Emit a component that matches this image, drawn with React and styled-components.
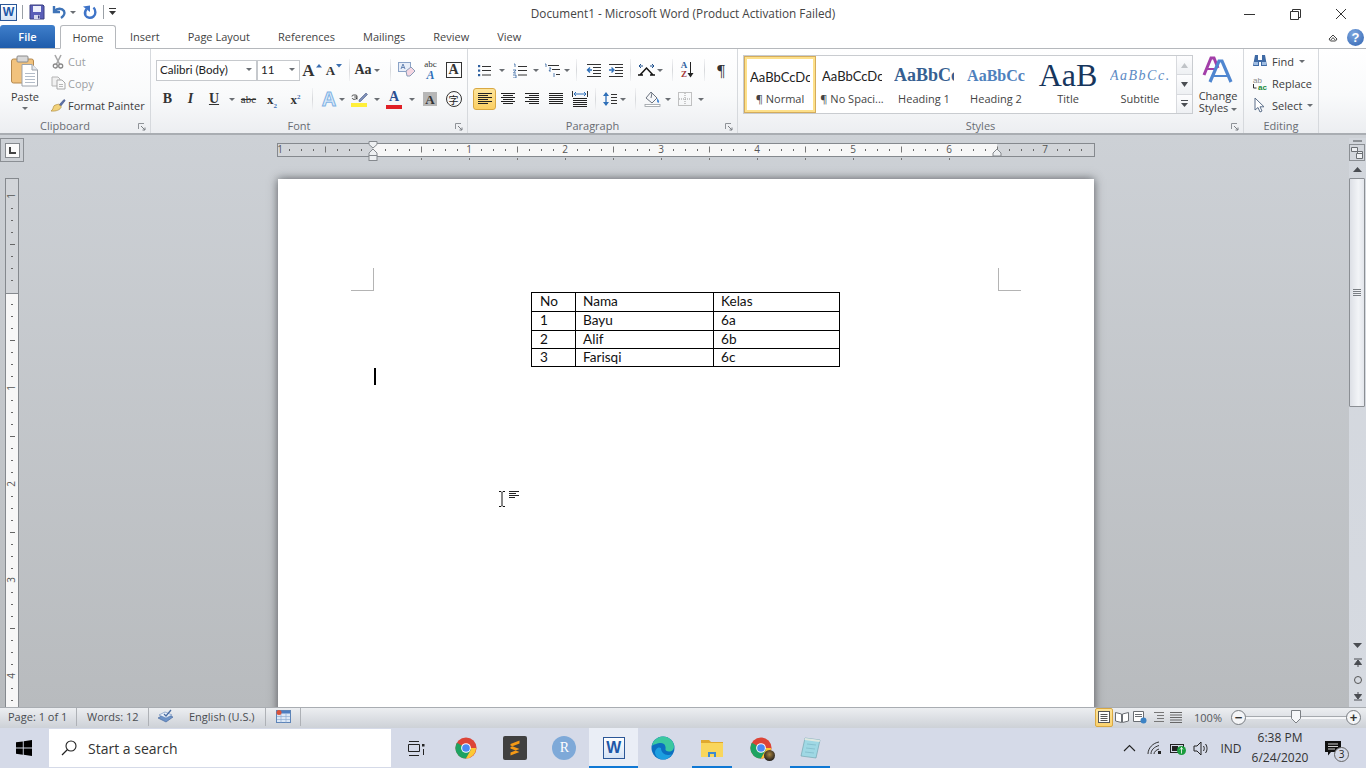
import React from 'react'
import styled, { createGlobalStyle } from 'styled-components'

const uiFont = '"Open Sans", "Noto Sans", "Liberation Sans", sans-serif'

const Global = createGlobalStyle`
  html, body { margin:0; padding:0; background:#fff; }
  body { font-family:${uiFont}; font-size:11px; color:#3c3c3c; overflow:hidden; }
  svg { display:block; flex:none; }
`
const Screen = styled.div`
  width:1366px;
  height:768px;
  display:flex;
  flex-direction:column;
  overflow:hidden;
`

/* title bar */
const TitleBar = styled.div`
  height:25px;
  flex:none;
  display:grid;
  grid-template-columns:1fr auto 1fr;
  background:#fff;
`
const Qat = styled.div`
  display:flex;
  align-items:center;
  height:24px;
`
const WordBadge = styled.span`
  width:${p => p.$size}px;
  height:${p => p.$size}px;
  box-sizing:border-box;
  display:inline-flex;
  align-items:center;
  justify-content:center;
  border:1px solid #2b5797;
  background:linear-gradient(#ffffff,#d5e3f5);
  color:#1e58a8;
  font:bold ${p => p.$size * 0.72}px "Liberation Sans", sans-serif;
`
const QatSep = styled.span`
  width:1px;
  height:14px;
  background:#9aa0a6;
  margin:0 ${p => p.$gap || 7}px;
`
const QatItem = styled.span`
  display:flex;
  align-items:center;
  margin-left:${p => p.$ml || 0}px;
`
const WindowTitle = styled.div`
  font-size:11.75px;
  line-height:26px;
  color:#444;
  white-space:nowrap;
`
const WindowControls = styled.div`
  display:flex;
  justify-content:flex-end;
  padding-right:2px;
`
const WinBtn = styled.span`
  width:46px;
  height:28px;
  display:flex;
  align-items:center;
  justify-content:center;
`

/* tabs */
const TabRow = styled.div`
  height:24px;
  flex:none;
  display:flex;
  align-items:flex-end;
  background:#fff;
  border-bottom:1px solid #b5b8bc;
  box-sizing:border-box;
`
const FileTab = styled.div`
  width:55px;
  height:23px;
  margin-right:5px;
  border-radius:3px 3px 0 0;
  background:linear-gradient(#3f7fcb,#1f5cab);
  color:#fff;
  text-align:center;
  line-height:23px;
  font-weight:600;
`
const Tab = styled.div`
  height:23px;
  padding:0 14px;
  line-height:24px;
  color:#444;
  box-sizing:border-box;
  ${p => p.$active && `
    width:56px;
    padding:0;
    text-align:center;
    background:#fff;
    border:1px solid #b5b8bc;
    border-bottom:1px solid #fff;
    border-radius:3px 3px 0 0;
    height:24px;
    margin-bottom:-1px;
    line-height:23px;
  `}
`
const TabRight = styled.div`
  margin-left:auto;
  display:flex;
  align-items:center;
  gap:9px;
  padding:0 2px 2px 0;
`
const HelpDot = styled.span`
  width:17px;
  height:17px;
  border-radius:50%;
  background:radial-gradient(circle at 40% 30%,#7fa8e0,#2f62b0);
  color:#fff;
  text-align:center;
  font:bold 13px/17px "Liberation Sans", sans-serif;
`

/* ribbon */
const Ribbon = styled.div`
  height:86px;
  flex:none;
  display:flex;
  box-sizing:border-box;
  background:linear-gradient(#ffffff 0%,#f9fafb 55%,#eceef1 100%);
  border-bottom:2px solid #a9adb2;
`
const Group = styled.div`
  width:${p => p.$w}px;
  box-sizing:border-box;
  flex:none;
  display:flex;
  flex-direction:column;
  position:relative;
  border-right:1px solid #d6d9dd;
`
const GroupBody = styled.div`
  height:68px;
  box-sizing:border-box;
  padding:${p => p.$pad || '0'};
  display:flex;
  flex-direction:${p => p.$col ? 'column' : 'row'};
  gap:${p => p.$gap || 0}px;
`
const GroupLabel = styled.div`
  height:16px;
  line-height:17px;
  text-align:center;
  padding-right:${p => p.$plain ? 0 : 20}px;
  color:#686c72;
`
const Launcher = styled.span`
  position:absolute;
  right:4px;
  bottom:2px;
`
const ToolRow = styled.div`
  display:flex;
  align-items:center;
  height:22px;
`
const Tool = styled.span`
  width:${p => p.$w || 23}px;
  height:22px;
  flex:none;
  display:inline-flex;
  align-items:center;
  justify-content:center;
  box-sizing:border-box;
  color:#2e2e2e;
  ${p => p.$active && `
    background:linear-gradient(#fde49a,#fbcf63);
    border:1px solid #d9a843;
    border-radius:3px;
  `}
`
const Caret = styled.span`
  width:0;
  height:0;
  flex:none;
  margin-left:${p => p.$ml || 0}px;
  border-left:3px solid transparent;
  border-right:3px solid transparent;
  border-top:3px solid #6a6e73;
`
const Divider = styled.span`
  width:1px;
  height:22px;
  flex:none;
  background:linear-gradient(#f2f3f5,#d6d8db,#f2f3f5);
  margin-left:${p => p.$ml || 0}px;
  margin-right:${p => p.$mr || 0}px;
`
const SerifGlyph = styled.span`
  font-family:"Liberation Serif", serif;
  font-weight:${p => p.$weight || 700};
  font-style:${p => p.$italic ? 'italic' : 'normal'};
  font-size:${p => p.$size || 13}px;
  color:${p => p.$color || '#333'};
  text-decoration:${p => p.$deco || 'none'};
  line-height:1;
`
const EffectGlyph = styled.span`
  font:bold 20px/1 "Liberation Sans", sans-serif;
  color:#dcebfa;
  -webkit-text-stroke:1px #7fb2e4;
`
const GlyphStack = styled.span`
  display:inline-flex;
  flex-direction:column;
  align-items:center;
  line-height:1;
`
const ColorBar = styled.span`
  width:${p => p.$w || 16}px;
  height:4px;
  margin-top:1px;
  background:${p => p.$color};
`
const BoxedGlyph = styled.span`
  width:${p => p.$size || 14}px;
  height:${p => p.$size || 14}px;
  box-sizing:border-box;
  display:inline-flex;
  align-items:center;
  justify-content:center;
  border:1px solid ${p => p.$border || 'transparent'};
  background:${p => p.$bg || 'transparent'};
`
const EnclosedGlyph = styled.span`
  width:16px;
  height:16px;
  box-sizing:border-box;
  display:inline-flex;
  align-items:center;
  justify-content:center;
  border:1px solid #333;
  border-radius:50%;
  font:10px "Noto Sans CJK JP", sans-serif;
  color:#222;
`
const SmallSub = styled.sub`
  font-size:7px;
  color:#3b6fb4;
  line-height:0;
`
const SmallSup = styled.sup`
  font-size:7px;
  color:#3b6fb4;
  line-height:0;
`
const RaisedArrow = styled.span`
  align-self:flex-start;
  margin-top:5px;
  margin-left:1px;
`
const Combo = styled.div`
  width:${p => p.$w}px;
  height:21px;
  box-sizing:border-box;
  flex:none;
  display:flex;
  align-items:center;
  justify-content:space-between;
  padding:0 4px 1px 3px;
  border:1px solid #c6c9cd;
  margin-right:${p => p.$mr || 0}px;
  background:#fff;
  font-family:Lato, "Open Sans", sans-serif;
  font-size:11.6px;
  color:#222;
`

/* clipboard and editing */
const PasteBtn = styled.div`
  width:50px;
  flex:none;
  display:flex;
  flex-direction:column;
  align-items:center;
  padding-top:5px;
  color:#3c3c3c;
`
const PasteLabel = styled.div`
  margin-top:3px;
  margin-bottom:3px;
  line-height:14px;
`
const SmallCol = styled.div`
  display:flex;
  flex-direction:column;
`
const SmallRow = styled.div`
  height:22px;
  display:flex;
  align-items:center;
  gap:${p => p.$gap || 4}px;
  color:${p => p.$muted ? '#9c9fa3' : '#3c3c3c'};
  white-space:nowrap;
`
const IconSlot = styled.span`
  width:16px;
  display:flex;
  justify-content:center;
`

/* styles gallery */
const Gallery = styled.div`
  display:flex;
  height:59px;
  box-sizing:border-box;
  background:#fff;
  border:1px solid #c9ccd0;
`
const StyleCard = styled.div`
  width:72px;
  height:57px;
  box-sizing:border-box;
  flex:none;
  display:flex;
  flex-direction:column;
  align-items:center;
  ${p => p.$active && `
    border:3px solid #fde08a;
    outline:1px solid #d4ac5c;
    outline-offset:-1px;
  `}
`
const StylePreview = styled.div`
  width:60px;
  height:${p => p.$active ? 33 : 36}px;
  box-sizing:border-box;
  padding-top:${p => p.$active ? 2 : 3}px;
  overflow:hidden;
  display:flex;
  align-items:center;
  justify-content:${p => p.$center ? 'center' : 'flex-start'};
  white-space:nowrap;
  font-family:${p => p.$serif ? '"Liberation Serif", serif' : 'Lato, "Open Sans", sans-serif'};
  font-size:${p => p.$size}px;
  font-weight:${p => p.$bold ? 700 : 400};
  font-style:${p => p.$italic ? 'italic' : 'normal'};
  letter-spacing:${p => p.$track || 0}px;
  color:${p => p.$color || '#222'};
`
const StyleName = styled.div`
  line-height:14px;
  white-space:nowrap;
  color:#444;
`
const GalleryScroll = styled.div`
  width:15px;
  flex:none;
  display:flex;
  flex-direction:column;
  border-left:1px solid #d8dade;
`
const ScrollCell = styled.span`
  flex:1;
  display:flex;
  align-items:center;
  justify-content:center;
  background:linear-gradient(#fdfdfe,#eef0f3);
  border-bottom:1px solid #d8dade;
  &:last-child { border-bottom:none; }
`
const BigBtn = styled.div`
  width:48px;
  margin-left:1px;
  flex:none;
  display:flex;
  flex-direction:column;
  align-items:center;
  color:#3c3c3c;
`
const BigBtnLabel = styled.div`
  width:44px;
  margin-top:7px;
  text-align:center;
  line-height:12px;
`
const InlineCaret = styled(Caret)`
  display:inline-block;
  margin-left:3px;
  vertical-align:middle;
`

/* document area */
const Workspace = styled.div`
  flex:1;
  min-height:0;
  display:flex;
  background:linear-gradient(#cdd1d6,#b8bbbe);
`
const LeftGutter = styled.div`
  width:24px;
  flex:none;
  padding-top:3px;
  box-sizing:border-box;
  overflow:hidden;
`
const TabSelector = styled.div`
  width:24px;
  height:24px;
  box-sizing:border-box;
  border:1px solid #8b8f94;
  display:flex;
  align-items:center;
  justify-content:center;
`
const TabStopBox = styled.span`
  width:15px;
  height:15px;
  box-sizing:border-box;
  background:#fbfbfb;
  border:1px solid #85898e;
  display:flex;
  align-items:center;
  justify-content:center;
`
const VRulerWrap = styled.div`
  margin:16px 0 0 5px;
`
const DocArea = styled.div`
  flex:1;
  min-width:0;
  display:flex;
  flex-direction:column;
  align-items:center;
  padding:5px 1px 0 0;
  overflow:hidden;
`
const RulerWrap = styled.div`
  flex:none;
  margin-bottom:17px;
`
const Page = styled.div`
  position:relative;
  flex:none;
  width:816px;
  height:1056px;
  box-sizing:border-box;
  padding:113px 0 0 96px;
  background:#fff;
  box-shadow:0 0 9px rgba(50,52,56,.75);
`
const Corner = styled.span`
  position:absolute;
  top:89px;
  ${p => p.$right ? 'left:720px;' : 'left:73px;'}
  width:23px;
  height:23px;
  box-sizing:border-box;
  border-bottom:1px solid #b4b4b4;
  ${p => p.$right ? 'border-left:1px solid #b4b4b4;' : 'border-right:1px solid #b4b4b4;'}
`
const DocTable = styled.table`
  margin-left:157px;
  width:308px;
  border-collapse:collapse;
  table-layout:fixed;
  font-family:Lato, "Open Sans", sans-serif;
  font-size:13.6px;
  color:#111;
`
const Td = styled.td`
  border:1px solid #000;
  padding:0 0 0 ${p => p.$pl || 7}px;
  height:${p => p.$h}px;
  line-height:1;
  box-sizing:border-box;
`
const TextCaret = styled.div`
  width:2px;
  height:17px;
  margin-top:1px;
  background:#000;
`
const MouseCursor = styled.span`
  position:absolute;
  left:220px;
  top:312px;
  display:flex;
  align-items:flex-start;
  gap:3px;
`

/* scrollbar */
const ScrollBar = styled.div`
  width:17px;
  flex:none;
  margin-top:3px;
  padding-bottom:2px;
  box-sizing:border-box;
  display:flex;
  flex-direction:column;
  background:linear-gradient(#d2d6dc,#d6dae1);
`
const SplitHandle = styled.span`
  height:6px;
  flex:none;
  display:flex;
  justify-content:center;
  align-items:center;
  &::after { content:""; width:9px; height:2px; background:#8d9196; }
`
const RulerToggle = styled.span`
  height:17px;
  width:16px;
  flex:none;
  box-sizing:border-box;
  border:1px solid #8b8f94;
  display:flex;
  align-items:center;
  justify-content:center;
`
const ScrollBtn = styled.span`
  height:17px;
  flex:none;
  display:flex;
  align-items:center;
  justify-content:center;
`
const Thumb = styled.span`
  height:229px;
  width:16px;
  flex:none;
  box-sizing:border-box;
  border:1px solid #8b8f94;
  border-radius:1px;
  background:linear-gradient(90deg,#dde0e6,#f2f4f7 60%,#e3e6ec);
  display:flex;
  align-items:center;
  justify-content:center;
`
const ScrollSpacer = styled.span`
  flex:1;
`

/* status bar */
const StatusBar = styled.div`
  height:21px;
  flex:none;
  display:flex;
  align-items:center;
  box-sizing:border-box;
  padding-bottom:2px;
  border-top:1px solid #a9adb2;
  background:linear-gradient(#eceef1,#cdd1d7);
  color:#4a4d52;
`
const StatusItem = styled.div`
  width:${p => p.$w}px;
  height:18px;
  box-sizing:border-box;
  flex:none;
  display:flex;
  align-items:center;
  justify-content:${p => p.$center ? 'center' : 'flex-start'};
  padding-left:${p => p.$pl || 0}px;
  padding-bottom:1px;
  gap:${p => p.$gap || 0}px;
  border-right:1px solid #aeb1b6;
  white-space:nowrap;
`
const StatusRight = styled.div`
  margin-left:auto;
  display:flex;
  align-items:center;
  padding-right:5px;
`
const ViewBtn = styled.span`
  width:18px;
  height:19px;
  box-sizing:border-box;
  display:flex;
  align-items:center;
  justify-content:center;
  ${p => p.$active && `
    background:linear-gradient(#fde49a,#fbd26e);
    border:1px solid #d9a843;
    border-radius:2px;
  `}
`
const ZoomLabel = styled.span`
  width:46px;
  text-align:center;
  color:#55585c;
`
const ZoomRound = styled.span`
  width:15px;
  height:15px;
  box-sizing:border-box;
  border:1px solid #777b80;
  border-radius:50%;
  background:#f4f5f7;
  color:#333;
  font:bold 13px/1 "Liberation Sans", sans-serif;
  display:flex;
  align-items:center;
  justify-content:center;
`
const ZoomTrack = styled.span`
  position:relative;
  width:100px;
  height:14px;
  display:flex;
  align-items:center;
  &::before { content:""; flex:1; height:2px; background:#f5f6f8; border-top:1px solid #a5a9ae; }
`
const ZoomThumb = styled.span`
  position:absolute;
  left:45px;
  top:0;
`

/* taskbar */
const Taskbar = styled.div`
  height:40px;
  flex:none;
  display:flex;
  align-items:stretch;
  background:#d5dae8;
  color:#222;
`
const StartBtn = styled.div`
  width:48px;
  flex:none;
  display:flex;
  align-items:center;
  justify-content:center;
`
const SearchBox = styled.div`
  width:342px;
  margin:1px;
  flex:none;
  display:flex;
  align-items:center;
  gap:11px;
  padding-left:12px;
  box-sizing:border-box;
  background:#fff;
  font-size:14px;
  color:#333;
`
const TaskSlot = styled.div`
  position:relative;
  width:49.25px;
  flex:none;
  display:flex;
  align-items:center;
  justify-content:center;
  background:${p => p.$active ? '#eaeef6' : 'transparent'};
  ${p => p.$running && `
    &::after {
      content:"";
      position:absolute;
      bottom:0;
      left:${p.$active ? 0 : 4}px;
      right:${p.$active ? 0 : 5}px;
      height:2px;
      background:#0f78d4;
    }
  `}
`
const SlotBadge = styled.span`
  position:relative;
  display:flex;
`
const ProfileDot = styled.span`
  position:absolute;
  right:-3px;
  bottom:-2px;
  width:11px;
  height:11px;
  border-radius:50%;
  background:radial-gradient(circle at 50% 40%,#a8843f,#2c2620 70%);
`
const RoundLetter = styled.span`
  width:24px;
  height:24px;
  border-radius:50%;
  background:#7ea9d8;
  color:#fff;
  text-align:center;
  font:14px/24px "Liberation Serif", serif;
`
const Tray = styled.div`
  margin-left:auto;
  display:flex;
  align-items:center;
  padding-right:12px;
`
const TraySlot = styled.div`
  width:${p => p.$w}px;
  flex:none;
  display:flex;
  align-items:center;
  justify-content:center;
  font-size:12px;
  color:#333;
`
const Clock = styled.div`
  width:64px;
  flex:none;
  text-align:center;
  font-size:12px;
  line-height:20px;
  color:#333;
`
const NotifyCount = styled.span`
  position:absolute;
  right:-8px;
  bottom:-6px;
  width:15px;
  height:15px;
  box-sizing:border-box;
  border:1px solid #666;
  border-radius:50%;
  background:#d5dae8;
  font-size:10px;
  line-height:13px;
  text-align:center;
  color:#222;
`

/* drawings */
const Svg = ({ w = 16, h = 16, children }) => (
  <svg width={w} height={h} viewBox={`0 0 ${w} ${h}`} fill="none">{children}</svg>
)
const Lines = ({ x = 1, rows, w = 13, color = '#333' }) => rows.map((y, i) => (
  <rect key={i} x={Array.isArray(y) ? y[1] : x} y={Array.isArray(y) ? y[0] : y} width={Array.isArray(y) ? y[2] : w} height="1" fill={color} />
))

const SaveIcon = () => (
  <Svg>
    <path d="M1 1h13l1 1v13H1z" fill="#5a5fb8" stroke="#3a3e80" />
    <rect x="4" y="2" width="8" height="6" fill="#eef0fb" />
    <rect x="5" y="11" width="6" height="4" fill="#d6d9ee" />
    <rect x="9" y="11.5" width="1.5" height="3" fill="#3a3e80" />
  </Svg>
)
const UndoIcon = () => (
  <Svg>
    <path d="M3 2v6h6M3.5 7.5C6 4 11 4 13 7c1 2 0 5-3 7" stroke="#3f74b8" strokeWidth="2.4" />
  </Svg>
)
const RedoIcon = () => (
  <Svg>
    <path d="M11.5 3.5C14 6 14 10.5 11.5 12.5 9 14.5 5 14 3.5 11.5 2.5 9.5 3 7 4.5 5" stroke="#3f74c8" strokeWidth="2.4" />
    <path d="M1 2.5L8 1.5V8z" fill="#3f74c8" />
  </Svg>
)
const CustomizeIcon = () => (
  <Svg w={7} h={8}>
    <rect x="0" y="0" width="7" height="1" fill="#333" />
    <path d="M0 3h7L3.5 7z" fill="#333" />
  </Svg>
)
const Minimize = () => <Svg w={11} h={11}><rect y="5" width="11" height="1" fill="#333" /></Svg>
const Restore = () => (
  <Svg w={11} h={11}>
    <path d="M.5 2.5h8v8h-8zM2.5 2.5v-2h8v8h-2" stroke="#333" />
  </Svg>
)
const Close = () => <Svg w={12} h={12}><path d="M1 1l10 10M11 1L1 11" stroke="#333" /></Svg>
const RibbonCollapse = () => (
  <Svg w={10} h={9}>
    <path d="M1 6l4-4 4 4-1.5 2h-5zM2.8 7L5 4.6 7.2 7" stroke="#444" />
  </Svg>
)
const LauncherIcon = () => (
  <Svg w={8} h={8}>
    <path d="M.5 6V.5H6" stroke="#8f9398" />
    <path d="M3 3l4 4M7 4.5V7H4.5" stroke="#7a7e83" />
  </Svg>
)
const PasteIcon = () => (
  <Svg w={28} h={32}>
    <rect x=".5" y="4" width="22" height="24" rx="2" fill="#f1c27d" stroke="#b5894e" />
    <rect x="6" y="1" width="11" height="6" rx="1" fill="#d8d8d8" stroke="#8a8a8a" />
    <path d="M11 9.5h10l5.5 5.5v16H11z" fill="#fff" stroke="#9da3ab" />
    <path d="M21 9.5V15h5.5" fill="#e4e8ee" stroke="#9da3ab" />
    <Lines x={14} w={10} rows={[18, 21, 24, 27]} color="#b3bcc8" />
  </Svg>
)
const CutIcon = () => (
  <Svg w={12} h={15}>
    <path d="M3 1l4.5 9M9 1L4.5 10" stroke="#a8a8a8" strokeWidth="1.6" />
    <circle cx="3.3" cy="12" r="2" stroke="#888" strokeWidth="1.3" />
    <circle cx="8.7" cy="12" r="2" stroke="#888" strokeWidth="1.3" />
  </Svg>
)
const CopyIcon = () => (
  <Svg w={15} h={14}>
    <path d="M1 1h6l2 2v7H1z" fill="#f1f1f1" stroke="#b4b4b4" />
    <path d="M6 4h5l3 3v6H6z" fill="#fafafa" stroke="#a8a8a8" />
    <Lines x={8} w={4} rows={[8, 10]} color="#b8b8b8" />
  </Svg>
)
const BrushIcon = () => (
  <Svg w={16} h={14}>
    <path d="M9 7L14 1.5l1.2 1L10.5 8.5z" fill="#5a6fa8" stroke="#3d4d80" strokeWidth=".6" />
    <path d="M8.5 6.2l2.8 2.4C10.5 12 6 13.5 1 13c2-1 2-3.5 3-5.2 1-.9 3-1.2 4.5-1.6z" fill="#f2d27b" stroke="#b08d3a" strokeWidth=".7" />
  </Svg>
)
const GrowArrow = ({ down }) => (
  <Svg w={6} h={4}>
    <path d={down ? 'M0 0h6L3 3.5z' : 'M0 3.5h6L3 0z'} fill="#3c6fb0" />
  </Svg>
)
const ClearFormat = () => (
  <Svg w={18} h={16}>
    <rect x=".5" y=".5" width="12" height="9" fill="#e8eef8" stroke="#8ba3c7" />
    <path d="M8 9l5-4 4 4-5 5h-3z" fill="#f5d7e2" stroke="#8a9cb8" />
    <path d="M3 7l2-5 2 5M3.7 5.5h2.6" stroke="#4a6da3" strokeWidth=".8" />
  </Svg>
)
const HighlightIcon = () => (
  <GlyphStack>
    <Svg w={17} h={11}>
      <path d="M8 9l7-7 1.500 1.500-7 7H8z" fill="#7e8fb8" stroke="#4a5a85" strokeWidth=".6" />
      <path d="M1 5.500C1 4 2 4 4 4s2 .6 2 2v2.500M3.200 6H6M1.200 7.200c.3 1.500 3 1.600 4.800 0" stroke="#222" strokeWidth=".8" />
    </Svg>
    <ColorBar $color="#ffef3a" />
  </GlyphStack>
)
const BulletsIcon = () => (
  <Svg>
    <rect x="1" y="3" width="2.2" height="2.2" fill="#2e5f9e" />
    <rect x="1" y="7.5" width="2.2" height="2.2" fill="#2e5f9e" />
    <rect x="1" y="12" width="2.2" height="2.2" fill="#2e5f9e" />
    <Lines x={5} w={9} rows={[4, 8, 12.5]} />
  </Svg>
)
const NumberingIcon = () => (
  <Svg>
    <path d="M2 2h1v3M1 8h3L1.5 11H4M1 13h3v3H1" stroke="#2e5f9e" strokeWidth=".8" />
    <Lines x={6} w={9} rows={[4, 8, 12.5]} />
  </Svg>
)
const MultilevelIcon = () => (
  <Svg>
    <path d="M1 2h1v3M5 6h2L5 9h2M10 11v4" stroke="#2e5f9e" strokeWidth=".8" />
    <Lines rows={[[3, 4, 11], [7, 8, 8], [12, 12, 4]]} />
  </Svg>
)
const IndentIcon = ({ increase }) => (
  <Svg>
    <Lines rows={[[2, 1, 14], [5, 7, 8], [8, 7, 8], [11, 7, 8], [14, 1, 14]]} />
    <path d={increase ? 'M1 8h4M3.5 5.5L6 8l-2.5 2.5' : 'M6 8H2M4 5.5L1.5 8 4 10.5'} stroke="#2e6fb8" strokeWidth="1.4" />
  </Svg>
)
const TextDirIcon = () => (
  <Svg w={17} h={14}>
    <path d="M2 12L8.5 5 15 12M0 12h5M12 12h5" stroke="#111" strokeWidth="1.5" />
    <path d="M1 3h4M3 1L1 3l2 2M12 3h4M14 1l2 2-2 2" stroke="#1d4f8c" strokeWidth="1" />
  </Svg>
)
const SortArrow = () => (
  <Svg w={7} h={16}>
    <path d="M3.5 0v13" stroke="#222" />
    <path d="M.5 11h6l-3 4.5z" fill="#222" />
  </Svg>
)
const AlignIcon = ({ rows: lineRows }) => (
  <Svg>
    <Lines rows={lineRows} color="#222" />
  </Svg>
)
const alignLeft = [[2, 1, 14], [4, 1, 10], [6, 1, 14], [8, 1, 10], [10, 1, 14], [12, 1, 10]]
const alignCenter = [[2, 1, 14], [4, 3, 10], [6, 1, 14], [8, 3, 10], [10, 1, 14], [12, 3, 10]]
const alignRight = [[2, 1, 14], [4, 5, 10], [6, 1, 14], [8, 5, 10], [10, 1, 14], [12, 5, 10]]
const alignJustify = [[2, 1, 14], [4, 1, 14], [6, 1, 14], [8, 1, 14], [10, 1, 14], [12, 1, 14]]
const DistributedIcon = () => (
  <Svg>
    <path d="M.5 0v6M15.5 0v6" stroke="#333" />
    <path d="M2 3h12M4 1L2 3l2 2M12 1l2 2-2 2" stroke="#2e6fb8" />
    <Lines x={1} w={14} rows={[7, 9, 11, 13, 15]} color="#222" />
  </Svg>
)
const LineSpacingIcon = () => (
  <Svg w={14} h={16}>
    <path d="M3 2v12" stroke="#2e6fb8" strokeWidth="1.3" />
    <path d="M0 5l3-4 3 4zM0 11l3 4 3-4z" fill="#2e6fb8" />
    <Lines x={8} w={6} rows={[3, 6, 9, 12]} />
  </Svg>
)
const BucketIcon = () => (
  <Svg w={17} h={16}>
    <path d="M7 1l6 6-5 5-6-5z" fill="#f6f7f9" stroke="#6c7480" />
    <path d="M8 2L7 7" stroke="#6c7480" />
    <path d="M13 7c1.5 1.5 2.5 3 2 4.5-1 .6-2 0-2-1.500z" fill="#4a8ad4" />
    <rect x="1" y="13.5" width="15" height="2" fill="#fff" stroke="#9a9ea3" strokeWidth=".8" />
  </Svg>
)
const BordersIcon = () => (
  <Svg w={14} h={14}>
    <rect x=".5" y=".5" width="13" height="13" stroke="#888" strokeDasharray="1 1" />
    <path d="M7 1v12M1 7h12" stroke="#999" strokeDasharray="1 1" />
  </Svg>
)
const ChangeStylesIcon = () => (
  <Svg w={32} h={28}>
    <path d="M2 20L9 3h3l4 10" stroke="#a23ea8" strokeWidth="3" />
    <path d="M5 14h8" stroke="#a23ea8" strokeWidth="2" />
    <path d="M8 27L17 6h3l9 21" stroke="#4f86d0" strokeWidth="3.2" />
    <path d="M12 21h13" stroke="#4f86d0" strokeWidth="2" />
  </Svg>
)
const BinocularsIcon = () => (
  <Svg>
    <path d="M3 2h3v5h4V2h3l2 11H9V9H7v4H1z" fill="#3f6aa5" />
    <rect x="2" y="9" width="4" height="3" fill="#9fbde2" />
    <rect x="10" y="9" width="4" height="3" fill="#9fbde2" />
  </Svg>
)
const ReplaceIcon = () => (
  <Svg w={16} h={15}>
    <text x="1" y="7" fontSize="8" fontFamily="Liberation Sans" fill="#888">ab</text>
    <text x="6" y="14" fontSize="8" fontWeight="700" fontFamily="Liberation Sans" fill="#1c8a3a">ac</text>
    <path d="M1.5 8v4h3" stroke="#333" />
  </Svg>
)
const PointerIcon = () => (
  <Svg w={12} h={16}>
    <path d="M1 1v12l3-2.500 2 4.500 2-1-2-4.200h4z" fill="#fff" stroke="#5c6f8a" />
  </Svg>
)
const SplitViewIcon = () => (
  <Svg w={12} h={12}>
    <path d="M.5.5h6v4h-6zM5.5 6.500h6v5h-6zM6.500 4.500h5v2h-5z" stroke="#6a6e73" fill="#eef0f3" />
  </Svg>
)
const UpTriangle = ({ w = 9, color = '#4a4d52' }) => (
  <Svg w={w} h={5}><path d={`M0 5h${w}L${w / 2} 0z`} fill={color} /></Svg>
)
const DownTriangle = ({ w = 9, color = '#4a4d52' }) => (
  <Svg w={w} h={5}><path d={`M0 0h${w}L${w / 2} 5z`} fill={color} /></Svg>
)
const MoreTriangle = () => (
  <Svg w={7} h={7}>
    <rect width="7" height="1" fill="#4a4d52" />
    <path d="M0 3h7L3.5 7z" fill="#4a4d52" />
  </Svg>
)
const Grip = () => (
  <Svg w={8} h={7}>
    <Lines x={0} w={8} rows={[0, 2, 4, 6]} color="#7a7e83" />
  </Svg>
)
const PagePrev = () => (
  <Svg w={8} h={9}><path d="M0 1h8M4 2L.5 6.500h7zM4 5v4" stroke="#4a4d52" fill="#4a4d52" /></Svg>
)
const PageNext = () => (
  <Svg w={8} h={9}><path d="M0 8h8M4 7L.5 2.500h7zM4 4V0" stroke="#4a4d52" fill="#4a4d52" /></Svg>
)
const BrowseDot = () => <Svg w={8} h={8}><circle cx="4" cy="4" r="3.5" stroke="#555" /></Svg>

const Ruler = () => {
  const left = 96
  const ticks = []
  for (let n = -7; n <= 59; n++) {
    const x = left + n * 12
    if (n % 8 === 0) {
      if (n !== 0) ticks.push(<text key={n} x={x} y="13" fontSize="10" fontFamily="Open Sans" textAnchor="middle" fill="#555">{Math.abs(n / 8)}</text>)
    } else if (n % 4 === 0) {
      ticks.push(<rect key={n} x={x} y="6.5" width="1" height="6" fill="#777" />)
    } else {
      ticks.push(<rect key={n} x={x} y="9" width="1" height="2" fill="#666" />)
    }
  }
  for (let n = 1; n <= 12; n++) {
    ticks.push(<rect key={'t' + n} x={left + n * 48} y="18" width="1" height="2" fill="#777" />)
  }
  return (
    <svg width="818" height="22" viewBox="0 0 818 22">
      <rect x=".5" y="3.5" width="817" height="13" fill="#d2d5d9" stroke="#85898e" />
      <rect x="96" y="4" width="624" height="12" fill="#f7f7f7" />
      <text x="3" y="13" fontSize="10" fontFamily="Open Sans" textAnchor="middle" fill="#555">1</text>
      {ticks}
      <path d="M92 1.5h8v3L96 8l-4-3.500z" fill="#eef0f2" stroke="#85898e" />
      <path d="M96 9l4 4v2.500h-8V13z" fill="#eef0f2" stroke="#85898e" />
      <rect x="92" y="15.5" width="8" height="5" fill="#eef0f2" stroke="#85898e" />
      <path d="M720 9l4 4v3h-8v-3z" fill="#eef0f2" stroke="#85898e" />
    </svg>
  )
}

const VerticalRuler = () => {
  const zero = 114
  const ticks = []
  for (let n = -8; n <= 34; n++) {
    const y = zero + n * 12
    if (n === 0) continue
    if (n % 8 === 0) {
      ticks.push(<text key={n} x="7" y={y} fontSize="10" fontFamily="Open Sans" textAnchor="middle" dominantBaseline="middle" fill="#555" transform={`rotate(-90 7 ${y})`}>{Math.abs(n / 8)}</text>)
    } else if (n % 4 === 0) {
      ticks.push(<rect key={n} x="5" y={y} width="5" height="1" fill="#666" />)
    } else {
      ticks.push(<rect key={n} x="6" y={y} width="2" height="1" fill="#666" />)
    }
  }
  return (
    <svg width="14" height="529" viewBox="0 0 14 529">
      <rect x=".5" y=".5" width="13" height="540" fill="#f7f7f7" stroke="#85898e" />
      <rect x="1" y="1" width="12" height="115" fill="#d2d5d9" />
      <rect x="0" y="115" width="14" height="1" fill="#85898e" />
      {ticks}
    </svg>
  )
}

const ChromeIcon = () => (
  <svg width="22" height="22" viewBox="0 0 24 24">
    <circle cx="12" cy="12" r="11.5" fill="#dc4437" />
    <path d="M12 12L2.100 6.200A11.500 11.500 0 0 0 12 23.500l5.800-10z" fill="#1ea362" />
    <path d="M12 12h11A11.500 11.500 0 0 1 12 23.500L17.800 13z" fill="#fcc934" />
    <circle cx="12" cy="12" r="5.3" fill="#fff" />
    <circle cx="12" cy="12" r="4.2" fill="#4a8af4" />
  </svg>
)
const SublimeIcon = () => (
  <svg width="24" height="24" viewBox="0 0 24 24">
    <rect width="24" height="24" rx="2" fill="#404040" />
    <path d="M16.5 4.500L7.500 8v3l9-3.500zM7.500 9.500l9 3.500v3l-9-3.500zM16.500 13l-9 3.500v3l9-3.500z" fill="#f59a16" />
  </svg>
)
const EdgeIcon = () => (
  <svg width="24" height="24" viewBox="0 0 24 24">
    <circle cx="12" cy="12" r="11.5" fill="#0c6fc0" />
    <path d="M1 10C2 3 8 .5 12 .5c6 0 11 4.500 11 10 0 3-2 5-5 5-2 0-4-1-3.500-2.500C15 11 14 7 10 7c-4 0-8 2-9 3z" fill="#3bc8a0" />
    <path d="M10 12c0 4 3 7 7 7 1.500 0 3-.4 4-1-2 3.500-5 5.500-9 5.500-5 0-8-4-8-7 0-3 3-6.500 6-4.500z" fill="#1d9fe0" />
  </svg>
)
const FolderIcon = () => (
  <svg width="22" height="20" viewBox="0 0 22 20">
    <path d="M0 2h8l2 2h12v2H0z" fill="#e0a92e" />
    <rect y="5" width="22" height="14" fill="#f9d65c" />
    <path d="M7 19v-5h8v5h-2v-3H9v3z" fill="#3e8ad0" />
  </svg>
)
const NotepadIcon = () => (
  <svg width="24" height="24" viewBox="0 0 24 24">
    <path d="M6 2l15 2-4 18L2 20z" fill="#9fd8e4" stroke="#6a9ea8" strokeWidth=".6" />
    <path d="M6 2l15 2-.5 2-15-2z" fill="#dfe8e0" />
    <path d="M8 8l9 1M7 12l9 1M6 16l9 1" stroke="#7cb8c6" strokeWidth=".7" />
  </svg>
)
const WinLogo = () => (
  <Svg>
    <path d="M0 2.300l6.800-.9v6.200H0zM7.700 1.300L16 0v7.600H7.700zM0 8.500h6.800v6.200L0 13.700zM7.700 8.500H16V16l-8.300-1.200z" fill="#000" />
  </Svg>
)
const SearchIcon = () => (
  <Svg>
    <circle cx="10" cy="6" r="5" stroke="#222" strokeWidth="1.1" />
    <path d="M6.500 9.500L1 15" stroke="#222" strokeWidth="1.3" />
  </Svg>
)
const TaskViewIcon = () => (
  <Svg w={17} h={15}>
    <path d="M1 .5h10M1 14.500h10M.5 3.500h11v7H.5z" stroke="#222" />
    <rect x="14" y="3" width="2.5" height="2.5" fill="#222" />
    <rect x="15" y="8" width="1" height="6" fill="#222" />
  </Svg>
)
const ChevronUp = () => <Svg w={13} h={8}><path d="M1 7l5.500-5.500L12 7" stroke="#222" strokeWidth="1.1" /></Svg>
const WifiIcon = () => (
  <Svg w={16} h={14}>
    <path d="M1 13C1 7 6 2 12 1M4 13c0-4 3-7 8-8.500M7 13c0-2 2-4 5-5" stroke="#333" />
    <rect x="11" y="10" width="3" height="3" fill="#222" />
  </Svg>
)
const BatteryIcon = () => (
  <Svg w={16} h={13}>
    <rect x=".5" y="2.5" width="13" height="8" stroke="#222" />
    <rect x="2" y="4" width="6" height="5" fill="#222" />
    <circle cx="11.5" cy="8.5" r="4.5" fill="#1b9c3d" />
    <path d="M11.500 5.500v6M10 7.500l1.500-2 1.500 2" stroke="#fff" strokeWidth=".8" />
  </Svg>
)
const SpeakerIcon = () => (
  <Svg w={17} h={15}>
    <path d="M1 5h3l4-4v13l-4-4H1z" stroke="#222" />
    <path d="M10.500 5c1 1.500 1 3.500 0 5M12.500 3c2 2.500 2 6.500 0 9" stroke="#222" />
  </Svg>
)
const NotifyIcon = () => (
  <Svg w={16} h={15}>
    <path d="M0 0h16v11H6l-3 3.500V11H0z" fill="#111" />
    <path d="M3 3h10M3 5.500h10M3 8h7" stroke="#fff" strokeWidth=".8" />
  </Svg>
)
const SpellIcon = () => (
  <Svg w={17} h={15}>
    <path d="M1 9l7-4 8 3-7 5z" fill="#6d93c8" stroke="#3c6098" strokeWidth=".6" />
    <path d="M2 6l6-3 7 3-6 3z" fill="#eef3fa" stroke="#5f84b8" strokeWidth=".6" />
    <path d="M7 5l2 2 5-6" stroke="#4a6da3" strokeWidth="1.3" />
  </Svg>
)
const MacroIcon = () => (
  <Svg w={15} h={13}>
    <rect x=".5" y=".5" width="14" height="12" fill="#dbe7f6" stroke="#5d84b8" />
    <rect x="1" y="1" width="13" height="2.5" fill="#4d7dc0" />
    <path d="M1 6.500h13M1 9.500h13M5 3.500v9M10 3.500v9" stroke="#8fadd2" strokeWidth=".7" />
    <circle cx="3" cy="2.5" r="2.5" fill="#d9533b" />
  </Svg>
)
const ViewIcon = ({ kind }) => {
  if (kind === 'print') return (
    <Svg w={12} h={12}>
      <rect x=".5" y=".5" width="11" height="11" fill="#fff" stroke="#555" />
      <Lines x={2.5} w={7} rows={[3, 5, 7, 9]} color="#555" />
    </Svg>
  )
  if (kind === 'read') return (
    <Svg w={14} h={12}>
      <path d="M.5 1.500L6.500 3v8.500L.5 10zM13.500 1.500L7.500 3v8.500l6-1.500z" stroke="#6a6e73" fill="#fff" />
    </Svg>
  )
  if (kind === 'web') return (
    <Svg w={14} h={13}>
      <path d="M.5.500h10v10H.5z" fill="#fff" stroke="#6a6e73" />
      <Lines x={2} w={7} rows={[3, 5]} color="#6a6e73" />
      <circle cx="10.5" cy="9.5" r="3" fill="#3c82c4" />
    </Svg>
  )
  if (kind === 'outline') return (
    <Svg w={12} h={12}>
      <Lines rows={[[1, 2, 10], [4, 5, 7], [7, 5, 7], [10, 2, 10]]} color="#777" />
    </Svg>
  )
  return (
    <Svg w={12} h={12}>
      <Lines x={0} w={12} rows={[1, 3.5, 6, 8.5, 11]} color="#666" />
    </Svg>
  )
}
const IBeam = () => (
  <Svg w={8} h={16}>
    <path d="M1 .5h2l1 1 1-1h2M4 1.500v13M1 15.500h2l1-1 1 1h2" stroke="#111" />
  </Svg>
)
const ClickTypeLeft = () => (
  <Svg w={11} h={7}>
    <Lines rows={[[0, 0, 10], [2, 0, 7], [4, 0, 10], [6, 0, 6]]} color="#222" />
  </Svg>
)
const LStop = () => (
  <Svg w={7} h={7}>
    <path d="M0 0h2v5h5v2H0z" fill="#444" />
  </Svg>
)
const ZoomThumbIcon = () => (
  <Svg w={10} h={14}>
    <path d="M.5.500h9v8L5 13 .5 8.500z" fill="#f6f7f9" stroke="#7b7f84" />
  </Svg>
)

const styleCards = [
  { name: '¶ Normal', preview: 'AaBbCcDc', size: 13, active: true },
  { name: '¶ No Spaci...', preview: 'AaBbCcDc', size: 13 },
  { name: 'Heading 1', preview: 'AaBbCc', size: 18, bold: true, serif: true, color: '#365f91' },
  { name: 'Heading 2', preview: 'AaBbCc', size: 16, bold: true, serif: true, color: '#4f81bd', center: true },
  { name: 'Title', preview: 'AaB', size: 32, serif: true, color: '#17365d', center: true },
  { name: 'Subtitle', preview: 'AaBbCc.', size: 14, italic: true, serif: true, color: '#5c8ac4', track: 1.5 },
]
const rows = [
  ['No', 'Nama', 'Kelas', 19],
  ['1', 'Bayu', '6a', 19],
  ['2', 'Alif', '6b', 18],
  ['3', 'Farisqi', '6c', 18],
]
const tabs = ['Insert', 'Page Layout', 'References', 'Mailings', 'Review', 'View']

const App = () => (
  <Screen>
    <Global />
    <TitleBar>
      <Qat>
        <WordBadge $size={17}>W</WordBadge>
        <QatSep $gap={5} />
        <QatItem $ml={1}><SaveIcon /></QatItem>
        <QatItem $ml={6}><UndoIcon /><Caret $ml={3} /></QatItem>
        <QatItem $ml={6}><RedoIcon /></QatItem>
        <QatSep $gap={5} />
        <CustomizeIcon />
      </Qat>
      <WindowTitle>Document1 - Microsoft Word (Product Activation Failed)</WindowTitle>
      <WindowControls>
        <WinBtn><Minimize /></WinBtn>
        <WinBtn><Restore /></WinBtn>
        <WinBtn><Close /></WinBtn>
      </WindowControls>
    </TitleBar>

    <TabRow>
      <FileTab>File</FileTab>
      <Tab $active>Home</Tab>
      {tabs.map(t => <Tab key={t}>{t}</Tab>)}
      <TabRight>
        <RibbonCollapse />
        <HelpDot>?</HelpDot>
      </TabRight>
    </TabRow>

    <Ribbon>
      <Group $w={151}>
        <GroupBody $pad="1px 0 0 0">
          <PasteBtn>
            <PasteIcon />
            <PasteLabel>Paste</PasteLabel>
            <Caret />
          </PasteBtn>
          <SmallCol>
            <SmallRow $muted $gap={2}><IconSlot><CutIcon /></IconSlot>Cut</SmallRow>
            <SmallRow $muted $gap={2}><IconSlot><CopyIcon /></IconSlot>Copy</SmallRow>
            <SmallRow $gap={2}><IconSlot><BrushIcon /></IconSlot>Format Painter</SmallRow>
          </SmallCol>
        </GroupBody>
        <GroupLabel>Clipboard</GroupLabel>
        <Launcher><LauncherIcon /></Launcher>
      </Group>

      <Group $w={317}>
        <GroupBody $col $gap={7} $pad="10px 0 0 5px">
          <ToolRow>
            <Combo $w={101}>Calibri (Body)<Caret /></Combo>
            <Combo $w={43} $mr={1}>11<Caret /></Combo>
            <Tool $w={22}><SerifGlyph $size={17}>A</SerifGlyph><RaisedArrow><GrowArrow /></RaisedArrow></Tool>
            <Tool $w={22}><SerifGlyph $size={13}>A</SerifGlyph><RaisedArrow><GrowArrow down /></RaisedArrow></Tool>
            <Divider $ml={4} />
            <Tool $w={34}><SerifGlyph $size={14}>Aa</SerifGlyph><Caret $ml={2} /></Tool>
            <Divider $ml={6} $mr={4} />
            <Tool $w={24}><ClearFormat /></Tool>
            <Tool><GlyphStack><SerifGlyph $size={9} $weight={400}>abc</SerifGlyph><SerifGlyph $size={12} $italic $color="#2e6fb8">A</SerifGlyph></GlyphStack></Tool>
            <Tool><BoxedGlyph $size={16} $border="#333"><SerifGlyph $size={14}>A</SerifGlyph></BoxedGlyph></Tool>
          </ToolRow>
          <ToolRow>
            <Tool><SerifGlyph $size={14}>B</SerifGlyph></Tool>
            <Tool><SerifGlyph $size={14} $italic>I</SerifGlyph></Tool>
            <Tool $w={24}><SerifGlyph $size={14} $deco="underline">U</SerifGlyph></Tool>
            <Tool $w={11}><Caret /></Tool>
            <Tool><SerifGlyph $size={11} $weight={400} $deco="line-through">abc</SerifGlyph></Tool>
            <Tool $w={24}><SerifGlyph $size={13}>x<SmallSub>2</SmallSub></SerifGlyph></Tool>
            <Tool><SerifGlyph $size={13}>x<SmallSup>2</SmallSup></SerifGlyph></Tool>
            <Divider $ml={5} $mr={7} />
            <Tool $w={18}><EffectGlyph>A</EffectGlyph></Tool>
            <Tool $w={7}><Caret /></Tool>
            <Tool $w={28}><HighlightIcon /></Tool>
            <Tool $w={7}><Caret /></Tool>
            <Tool $w={28}><GlyphStack><SerifGlyph $size={14} $color="#2b4f92">A</SerifGlyph><ColorBar $color="#e01f26" /></GlyphStack></Tool>
            <Tool $w={7}><Caret /></Tool>
            <Tool $w={30}><BoxedGlyph $bg="#b7b7b7"><SerifGlyph $size={13}>A</SerifGlyph></BoxedGlyph></Tool>
            <Tool $w={17}><EnclosedGlyph>字</EnclosedGlyph></Tool>
          </ToolRow>
        </GroupBody>
        <GroupLabel>Font</GroupLabel>
        <Launcher><LauncherIcon /></Launcher>
      </Group>

      <Group $w={270}>
        <GroupBody $col $gap={7} $pad="10px 0 0 5px">
          <ToolRow>
            <Tool><BulletsIcon /></Tool>
            <Tool $w={12}><Caret /></Tool>
            <Tool><NumberingIcon /></Tool>
            <Tool $w={10}><Caret /></Tool>
            <Tool $w={22}><MultilevelIcon /></Tool>
            <Tool $w={8}><Caret /></Tool>
            <Divider $ml={5} $mr={5} />
            <Tool><IndentIcon /></Tool>
            <Tool $w={22}><IndentIcon increase /></Tool>
            <Divider $ml={3} $mr={6} />
            <Tool $w={19}><TextDirIcon /></Tool>
            <Tool $w={8}><Caret /></Tool>
            <Divider $ml={8} $mr={3} />
            <Tool><GlyphStack><SerifGlyph $size={9} $color="#2e5f9e">A</SerifGlyph><SerifGlyph $size={9} $color="#a33a3a">Z</SerifGlyph></GlyphStack><SortArrow /></Tool>
            <Divider $ml={5} $mr={5} />
            <Tool $w={22}><SerifGlyph $size={17} $weight={400}>¶</SerifGlyph></Tool>
          </ToolRow>
          <ToolRow>
            <Tool $active><AlignIcon rows={alignLeft} /></Tool>
            <Tool $w={24}><AlignIcon rows={alignCenter} /></Tool>
            <Tool $w={24}><AlignIcon rows={alignRight} /></Tool>
            <Tool $w={24}><AlignIcon rows={alignJustify} /></Tool>
            <Tool><DistributedIcon /></Tool>
            <Divider $ml={4} $mr={3} />
            <Tool $w={30}><LineSpacingIcon /><Caret $ml={3} /></Tool>
            <Divider $ml={6} $mr={5} />
            <Tool $w={22}><BucketIcon /></Tool>
            <Tool $w={10}><Caret /></Tool>
            <Tool $w={24}><BordersIcon /></Tool>
            <Tool $w={8}><Caret /></Tool>
          </ToolRow>
        </GroupBody>
        <GroupLabel>Paragraph</GroupLabel>
        <Launcher><LauncherIcon /></Launcher>
      </Group>

      <Group $w={506}>
        <GroupBody $pad="6px 0 0 5px">
          <Gallery>
            {styleCards.map(c => (
              <StyleCard key={c.name} $active={c.active}>
                <StylePreview
                  $active={c.active}
                  $size={c.size}
                  $bold={c.bold}
                  $serif={c.serif}
                  $italic={c.italic}
                  $color={c.color}
                  $center={c.center}
                  $track={c.track}
                >
                  {c.preview}
                </StylePreview>
                <StyleName>{c.name}</StyleName>
              </StyleCard>
            ))}
            <GalleryScroll>
              <ScrollCell><UpTriangle w={7} color="#c0c3c7" /></ScrollCell>
              <ScrollCell><DownTriangle w={7} /></ScrollCell>
              <ScrollCell><MoreTriangle /></ScrollCell>
            </GalleryScroll>
          </Gallery>
          <BigBtn>
            <ChangeStylesIcon />
            <BigBtnLabel>Change Styles<InlineCaret /></BigBtnLabel>
          </BigBtn>
        </GroupBody>
        <GroupLabel>Styles</GroupLabel>
        <Launcher><LauncherIcon /></Launcher>
      </Group>

      <Group $w={75}>
        <GroupBody $pad="1px 0 0 8px">
          <SmallCol>
            <SmallRow><IconSlot><BinocularsIcon /></IconSlot>Find<Caret $ml={1} /></SmallRow>
            <SmallRow><IconSlot><ReplaceIcon /></IconSlot>Replace</SmallRow>
            <SmallRow><IconSlot><PointerIcon /></IconSlot>Select<Caret $ml={1} /></SmallRow>
          </SmallCol>
        </GroupBody>
        <GroupLabel $plain>Editing</GroupLabel>
      </Group>
    </Ribbon>

    <Workspace>
      <LeftGutter>
        <TabSelector><TabStopBox><LStop /></TabStopBox></TabSelector>
        <VRulerWrap><VerticalRuler /></VRulerWrap>
      </LeftGutter>

      <DocArea>
        <RulerWrap><Ruler /></RulerWrap>
        <Page>
          <Corner />
          <Corner $right />
          <DocTable>
            <colgroup>
              <col width="44" />
              <col width="138" />
              <col width="126" />
            </colgroup>
            <tbody>
              {rows.map(r => (
                <tr key={r[0]}>
                  <Td $h={r[3]} $pl={8}>{r[0]}</Td>
                  <Td $h={r[3]}>{r[1]}</Td>
                  <Td $h={r[3]}>{r[2]}</Td>
                </tr>
              ))}
            </tbody>
          </DocTable>
          <TextCaret />
          <MouseCursor><IBeam /><ClickTypeLeft /></MouseCursor>
        </Page>
      </DocArea>

      <ScrollBar>
        <SplitHandle />
        <RulerToggle><SplitViewIcon /></RulerToggle>
        <ScrollBtn><UpTriangle /></ScrollBtn>
        <Thumb><Grip /></Thumb>
        <ScrollSpacer />
        <ScrollBtn><DownTriangle /></ScrollBtn>
        <ScrollBtn><PagePrev /></ScrollBtn>
        <ScrollBtn><BrowseDot /></ScrollBtn>
        <ScrollBtn><PageNext /></ScrollBtn>
      </ScrollBar>
    </Workspace>

    <StatusBar>
      <StatusItem $w={77} $pl={8}>Page: 1 of 1</StatusItem>
      <StatusItem $w={72} $pl={10}>Words: 12</StatusItem>
      <StatusItem $w={117} $pl={8} $gap={15}><SpellIcon />English (U.S.)</StatusItem>
      <StatusItem $w={35} $center><MacroIcon /></StatusItem>
      <StatusRight>
        <ViewBtn $active><ViewIcon kind="print" /></ViewBtn>
        <ViewBtn><ViewIcon kind="read" /></ViewBtn>
        <ViewBtn><ViewIcon kind="web" /></ViewBtn>
        <ViewBtn><ViewIcon kind="outline" /></ViewBtn>
        <ViewBtn><ViewIcon kind="draft" /></ViewBtn>
        <ZoomLabel>100%</ZoomLabel>
        <ZoomRound>−</ZoomRound>
        <ZoomTrack><ZoomThumb><ZoomThumbIcon /></ZoomThumb></ZoomTrack>
        <ZoomRound>+</ZoomRound>
      </StatusRight>
    </StatusBar>

    <Taskbar>
      <StartBtn><WinLogo /></StartBtn>
      <SearchBox><SearchIcon />Start a search</SearchBox>
      <TaskSlot><TaskViewIcon /></TaskSlot>
      <TaskSlot><ChromeIcon /></TaskSlot>
      <TaskSlot><SublimeIcon /></TaskSlot>
      <TaskSlot><RoundLetter>R</RoundLetter></TaskSlot>
      <TaskSlot $active $running><WordBadge $size={22}>W</WordBadge></TaskSlot>
      <TaskSlot><EdgeIcon /></TaskSlot>
      <TaskSlot $running><FolderIcon /></TaskSlot>
      <TaskSlot><SlotBadge><ChromeIcon /><ProfileDot /></SlotBadge></TaskSlot>
      <TaskSlot $running><NotepadIcon /></TaskSlot>
      <Tray>
        <TraySlot $w={25}><ChevronUp /></TraySlot>
        <TraySlot $w={25}><WifiIcon /></TraySlot>
        <TraySlot $w={21}><BatteryIcon /></TraySlot>
        <TraySlot $w={26}><SpeakerIcon /></TraySlot>
        <TraySlot $w={34}>IND</TraySlot>
        <Clock>6:38 PM<br />6/24/2020</Clock>
        <TraySlot $w={42}>
          <SlotBadge><NotifyIcon /><NotifyCount>3</NotifyCount></SlotBadge>
        </TraySlot>
      </Tray>
    </Taskbar>
  </Screen>
)

export default App
